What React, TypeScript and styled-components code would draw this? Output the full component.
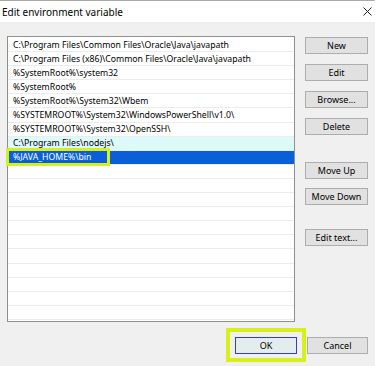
import React from "react";
import styled, { createGlobalStyle } from "styled-components";

const Global = createGlobalStyle`
  html, body { margin: 0; padding: 0; background: #f0f0f0; }
  body { font-family: "Noto Sans", "Open Sans", sans-serif; }
`;

const Window = styled.div`
  width: 375px;
  height: 366px;
  background: #f0f0f0;
  display: flex;
  flex-direction: column;
  overflow: hidden;
  color: #000;
  font-size: 8.7px;
`;

const TitleBar = styled.div`
  height: 22px;
  box-sizing: border-box;
  border-top: 1px solid #a8a8a8;
  background: #fff;
  display: flex;
  align-items: center;
  justify-content: space-between;
  padding: 0 3px 0 2px;
  font-size: 10px;
`;

const Close = styled.span`
  width: 9px;
  height: 9px;
  display: flex;
`;

const Main = styled.div`
  display: flex;
  gap: 10px;
  padding: 14px 7px 0 7px;
`;

const ListBox = styled.div`
  position: relative;
  width: 288px;
  height: 286px;
  box-sizing: border-box;
  border: 1px solid #8f8f8f;
  background: #fff;
  padding-top: 1px;
`;

const Row = styled.div<{ $selected?: boolean; $hover?: boolean }>`
  height: 14.1px;
  box-sizing: border-box;
  border-bottom: 1px solid #ececec;
  padding-left: 5px;
  display: flex;
  align-items: center;
  white-space: nowrap;
  overflow: hidden;
  background: ${(p) => (p.$selected ? "#0a5fd8" : p.$hover ? "#dcfafa" : "#fff")};
  color: ${(p) => (p.$selected ? "#fff" : "#000")};
`;

const Marker = styled.div`
  position: absolute;
  left: -2px;
  top: 111px;
  width: 104px;
  height: 18px;
  border: 3px solid #d8f01a;
  box-sizing: border-box;
  pointer-events: none;
`;

const ButtonColumn = styled.div`
  display: flex;
  flex-direction: column;
  width: 63px;
  padding-top: 1px;
`;

const Button = styled.button<{ $gap?: number; $focus?: boolean; $w?: number }>`
  width: ${(p) => p.$w ?? 63}px;
  height: 17px;
  margin-top: ${(p) => p.$gap ?? 0}px;
  box-sizing: border-box;
  border: 1px solid ${(p) => (p.$focus ? "#3a3ad0" : "#adadad")};
  background: ${(p) => (p.$focus ? "#e3eeec" : "#e1e1e1")};
  font-family: "Noto Sans", "Open Sans", sans-serif;
  font-size: 9px;
  color: #000;
  padding: 0;
  display: flex;
  align-items: center;
  justify-content: center;
`;

const Footer = styled.div`
  display: flex;
  justify-content: flex-end;
  align-items: center;
  gap: 1px;
  padding: 6px 7px 0 0;
`;

const FocusMarker = styled.div`
  border: 4px solid #d8f01a;
  padding: 5px 5px 4px 5px;
  display: flex;
`;

const paths = [
  "C:\\Program Files\\Common Files\\Oracle\\Java\\javapath",
  "C:\\Program Files (x86)\\Common Files\\Oracle\\Java\\javapath",
  "%SystemRoot%\\system32",
  "%SystemRoot%",
  "%SystemRoot%\\System32\\Wbem",
  "%SYSTEMROOT%\\System32\\WindowsPowerShell\\v1.0\\",
  "%SYSTEMROOT%\\System32\\OpenSSH\\",
  "C:\\Program Files\\nodejs\\",
  "%JAVA_HOME%\\bin",
];

export default function App() {
  const rows = [...paths, ...Array(11).fill("")];
  return (
    <>
      <Global />
      <Window>
        <TitleBar>
          <span>Edit environment variable</span>
          <Close>
            <svg width="9" height="9" viewBox="0 0 9 9">
              <path d="M0.5 0.5 L8.5 8.5 M8.5 0.5 L0.5 8.5" stroke="#222" strokeWidth="1" />
            </svg>
          </Close>
        </TitleBar>
        <Main>
          <ListBox>
            {rows.map((r, i) => (
              <Row key={i} $selected={i === 8} $hover={i === 7}>
                {r}
              </Row>
            ))}
            <Marker />
          </ListBox>
          <ButtonColumn>
            <Button>New</Button>
            <Button $gap={10}>Edit</Button>
            <Button $gap={10}>Browse...</Button>
            <Button $gap={10}>Delete</Button>
            <Button $gap={27}>Move Up</Button>
            <Button $gap={9}>Move Down</Button>
            <Button $gap={24}>Edit text...</Button>
          </ButtonColumn>
        </Main>
        <Footer>
          <FocusMarker>
            <Button $focus $w={62}>OK</Button>
          </FocusMarker>
          <Button $w={61}>Cancel</Button>
        </Footer>
      </Window>
    </>
  );
}
